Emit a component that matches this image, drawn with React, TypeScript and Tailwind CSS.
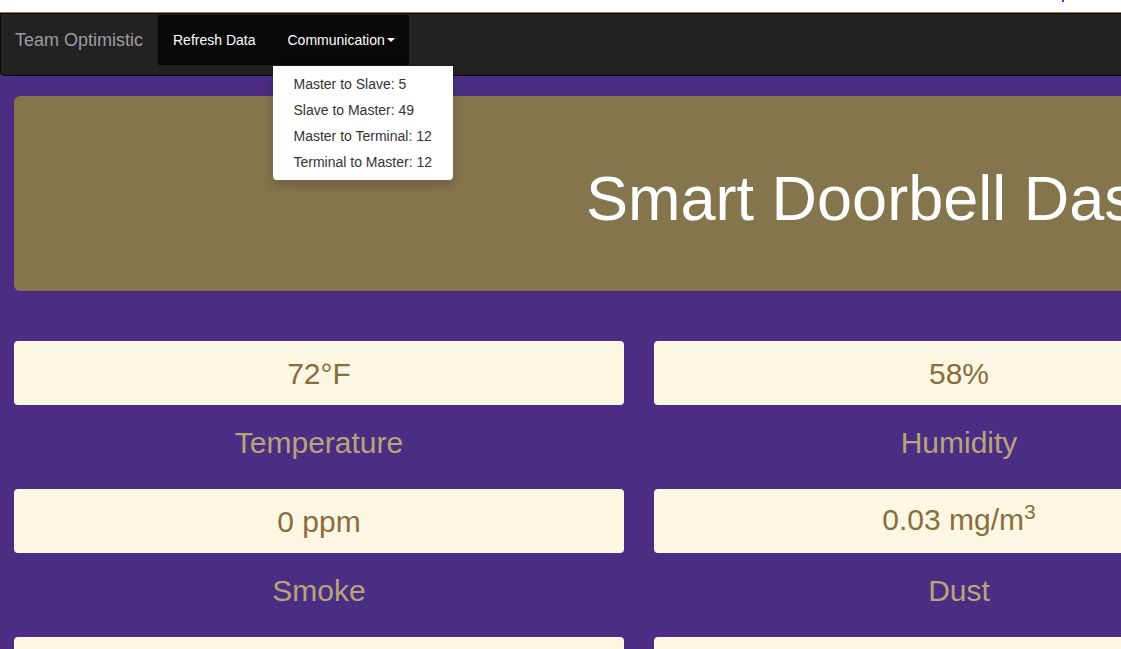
import React from "react";

const items: { value: React.ReactNode; label: string }[] = [
  { value: "72°F", label: "Temperature" },
  { value: "58%", label: "Humidity" },
  { value: "Closed", label: "Door" },
  { value: "0 ppm", label: "Smoke" },
  {
    value: (
      <>
        0.03 mg/m<span className="text-[21px] relative -top-[11px]">3</span>
      </>
    ),
    label: "Dust",
  },
  { value: "None", label: "Motion" },
  { value: "—", label: "Visitors" },
  { value: "—", label: "Light" },
  { value: "—", label: "Sound" },
];

export default function App() {
  return (
    <div className="w-[1121px] h-[649px] overflow-hidden bg-[#4b2e83] font-['Liberation_Sans',Arial,sans-serif]">
      <div className="w-[1920px]">
        <div className="h-[12px] bg-white relative">
          <div className="absolute left-[1062px] top-0 w-[2px] h-[2px] bg-[#3a3aff]" />
        </div>
        <div className="h-px bg-[#a07a5c]" />
        <nav className="h-[63px] bg-[#222222] border border-[#080808] rounded-b-[4px] flex items-start text-[14px]">
          <div className="h-[50px] mt-px w-[157px] flex items-center pl-[14px] text-[18px] text-[#9d9d9d] whitespace-nowrap">
            Team Optimistic
          </div>
          <div className="h-[50px] mt-px flex bg-[#080808] text-white">
            <div className="pl-[15px] pr-[17px] flex items-center leading-[20px]">Refresh Data</div>
            <div className="relative pl-[15px] pr-[14px] flex items-center leading-[20px]">
              Communication
              <span className="ml-[2px] inline-block w-0 h-0 border-x-[4px] border-x-transparent border-t-[4px] border-t-white" />
              <div className="absolute left-[1px] top-[51px] w-[180px] bg-white rounded-b-[4px] py-[5px] shadow-[0_6px_12px_rgba(0,0,0,0.175)] text-[#333333] z-10">
                <div className="px-[20px] py-[3px] leading-[20px] whitespace-nowrap">Master to Slave: 5</div>
                <div className="px-[20px] py-[3px] leading-[20px] whitespace-nowrap">Slave to Master: 49</div>
                <div className="px-[20px] py-[3px] leading-[20px] whitespace-nowrap">Master to Terminal: 12</div>
                <div className="px-[20px] py-[3px] leading-[20px] whitespace-nowrap">Terminal to Master: 12</div>
              </div>
            </div>
          </div>
        </nav>
        <div className="pl-[14px] pt-[20px]">
          <div className="w-[1890px] h-[195px] bg-[#85754d] rounded-[6px] pt-[68px] text-center text-white text-[63px] leading-[69px]">
            Smart Doorbell Dashboard
          </div>
          <div className="mt-[50px] w-[1890px] grid grid-cols-3 gap-x-[30px]">
            {items.map((it, i) => (
              <div key={i}>
                <div className="h-[64px] bg-[#fcf7e3] rounded-[4px] flex items-center justify-center text-[30px] leading-[33px] text-[#8a6d3b]">
                  <span>{it.value}</span>
                </div>
                <div className="h-[84px] pt-[21px] text-center text-[30px] leading-[33px] text-[#b7a57a]">
                  {it.label}
                </div>
              </div>
            ))}
          </div>
        </div>
      </div>
    </div>
  );
}
